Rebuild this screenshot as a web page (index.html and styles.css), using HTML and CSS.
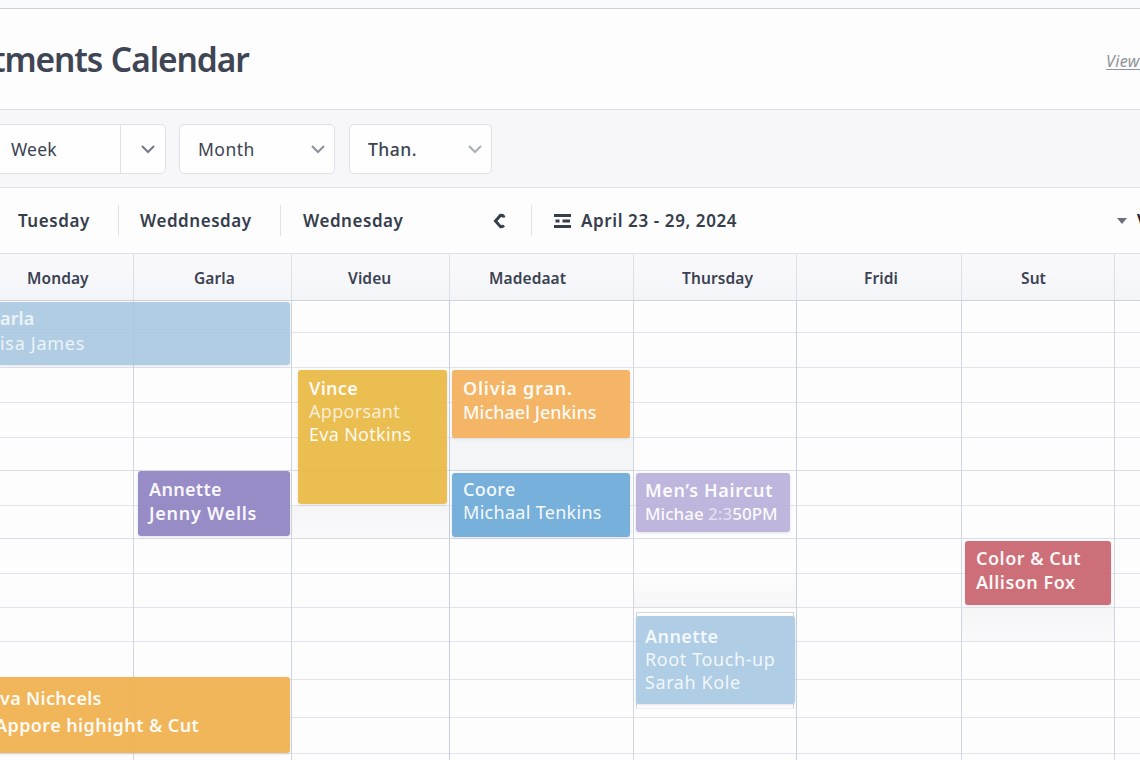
FILE: index.html
```html
<!DOCTYPE html>
<html lang="en">
<head>
    <meta charset="UTF-8">
    <meta name="viewport" content="width=device-width, initial-scale=1.0">
    <title>Appointments Calendar</title>
    <link rel="stylesheet" href="styles.css">
</head>
<body>
    <div class="topbar"></div>

    <header class="header">
        <h1>tments Calendar</h1>
        <a class="view-link">View</a>
    </header>

    <div class="filters">
        <div class="select select-week">
            <span>Week</span>
            <div class="select-toggle">
                <svg width="16" height="10" viewBox="0 0 16 10"><path d="M2 2l6 6 6-6"/></svg>
            </div>
        </div>
        <div class="select select-month">
            <span>Month</span>
            <svg width="16" height="10" viewBox="0 0 16 10"><path d="M2 2l6 6 6-6"/></svg>
        </div>
        <div class="select select-staff">
            <span>Than.</span>
            <svg width="16" height="10" viewBox="0 0 16 10"><path d="M2 2l6 6 6-6"/></svg>
        </div>
    </div>

    <nav class="toolbar">
        <span class="tab tab-1">Tuesday</span>
        <span class="tab tab-2">Weddnesday</span>
        <span class="tab tab-3">Wednesday</span>
        <svg class="prev" width="14" height="16" viewBox="0 0 14 16"><path d="M12 4.500Q11.500 2.200 8.500 2.300L3.500 8l5 5.700Q10.500 14 12 12.500"/></svg>
        <div class="range">
            <svg width="17" height="14" viewBox="0 0 17 14"><path d="M0 1.500h17M1.500 7h4M8.500 7h7.500M0 12.500h17"/></svg>
            <span>April 23 - 29, 2024</span>
        </div>
        <div class="view-menu"><i class="caret"></i><span>View</span></div>
    </nav>

    <div class="days">
        <div><span class="d1">Monday</span></div>
        <div><span class="d2">Garla</span></div>
        <div><span class="d3">Videu</span></div>
        <div><span class="d4">Madedaat</span></div>
        <div><span class="d5">Thursday</span></div>
        <div><span class="d6">Fridi</span></div>
        <div><span class="d7">Sut</span></div>
        <div></div>
    </div>

    <main class="calendar">
        <div class="row r1"></div>
        <div class="row r2"></div>
        <div class="row r3"></div>
        <div class="row r4"></div>
        <div class="row r5"></div>
        <div class="row r6"></div>
        <div class="row r7"></div>
        <div class="row r8"></div>
        <div class="row r9"></div>
        <div class="row r10"></div>
        <div class="row r11"></div>
        <div class="row r12"></div>
        <div class="row r13"></div>

        <div class="shade shade-vince"></div>
        <div class="shade shade-olivia"></div>
        <div class="shade shade-thursday"></div>
        <div class="shade shade-color"></div>

        <div class="col c1"></div>
        <div class="col c2"></div>
        <div class="col c3"></div>
        <div class="col c4"></div>
        <div class="col c5"></div>
        <div class="col c6"></div>
        <div class="col c7"></div>

        <div class="event ev-garla">
            <b>arla</b>
            <span>isa James</span>
        </div>
        <div class="event ev-vince">
            <b>Vince</b>
            <span class="faded">Apporsant</span>
            <span>Eva Notkins</span>
        </div>
        <div class="event ev-olivia">
            <b>Olivia gran.</b>
            <span class="medium">Michael Jenkins</span>
        </div>
        <div class="event ev-jenny">
            <b>Annette</b>
            <b>Jenny Wells</b>
        </div>
        <div class="event ev-coore">
            <b class="medium">Coore</b>
            <span>Michaal Tenkins</span>
        </div>
        <div class="event ev-haircut">
            <b>Men’s Haircut</b>
            <span class="medium">Michae <i class="ghost">2:3</i>50PM</span>
        </div>
        <div class="event ev-color">
            <b>Color &amp; Cut</b>
            <b>Allison Fox</b>
        </div>
        <div class="root-frame"></div>
        <div class="event ev-root">
            <b>Annette</b>
            <span>Root Touch-up</span>
            <span>Sarah Kole</span>
        </div>
        <div class="event ev-highlight">
            <b>va Nichcels</b>
            <b class="service">Appore highight &amp; Cut</b>
        </div>
    </main>
</body>
</html>
```

FILE: styles.css
```css
* {
    box-sizing: border-box;
}

body {
    margin: 0;
    width: 1140px;
    height: 760px;
    overflow: hidden;
    font-family: "Noto Sans", "Open Sans", sans-serif;
    color: #3b4252;
    background: #fdfdfe;
    display: flex;
    flex-direction: column;
}

svg {
    display: block;
    fill: none;
}

.topbar {
    height: 9px;
    background: #fafbfc;
    border-bottom: 1px solid #cdd2da;
    flex: none;
}

.header {
    height: 101px;
    flex: none;
    display: flex;
    justify-content: space-between;
    align-items: center;
    border-bottom: 1px solid #dcdfe6;
}

h1 {
    margin: 0 0 0 -8px;
    font-size: 33.5px;
    font-weight: 600;
    letter-spacing: -1.1px;
    word-spacing: 1px;
    color: #3e4554;
    white-space: nowrap;
}

.view-link {
    width: 34px;
    font-size: 16px;
    font-style: italic;
    letter-spacing: 0.4px;
    color: #909298;
    text-decoration: underline;
    text-underline-offset: 2px;
    white-space: nowrap;
    padding-top: 3px;
}

.filters {
    height: 78px;
    flex: none;
    display: flex;
    align-items: center;
    background: #f7f7f9;
    border-bottom: 1px solid #e1e3e9;
}

.select {
    height: 50px;
    display: flex;
    align-items: center;
    justify-content: space-between;
    background: #fefefe;
    border: 1px solid #dfe1e8;
    border-radius: 5px;
    font-size: 17.5px;
    letter-spacing: 0.5px;
    padding: 0 8px 0 18px;
}

.select svg {
    stroke: #8b909c;
    stroke-width: 2;
}

.select-week {
    width: 171px;
    margin-left: -5px;
    padding: 0 0 0 15px;
    letter-spacing: 0.2px;
}

.select-toggle {
    width: 45px;
    height: 48px;
    border-left: 1px solid #dfe1e8;
    display: flex;
    align-items: center;
    justify-content: center;
    padding-left: 10px;
}

.select-week svg {
    stroke: #747987;
}

.select-month {
    width: 156px;
    margin-left: 13px;
}

.select-staff {
    width: 143px;
    margin-left: 14px;
    font-weight: 500;
}

.select-staff svg {
    stroke: #a9adb6;
}

.toolbar {
    height: 66px;
    flex: none;
    display: flex;
    align-items: center;
    border-bottom: 1px solid #dfe1e6;
    font-size: 17px;
    font-weight: 600;
    letter-spacing: 0.55px;
    color: #363d4b;
    white-space: nowrap;
}

.tab {
    height: 31px;
    line-height: 31px;
}

.tab-1 {
    width: 119px;
    padding-left: 18px;
    border-right: 1px solid #dfe2e9;
}

.tab-2 {
    width: 162px;
    padding-left: 21px;
    border-right: 1px solid #dfe2e9;
}

.tab-3 {
    width: 211px;
    padding-left: 22px;
}

.prev {
    stroke: #363d4b;
    stroke-width: 3;
}

.range {
    height: 31px;
    margin-left: 25px;
    padding-left: 22px;
    border-left: 1px solid #dfe2e9;
    display: flex;
    align-items: center;
    gap: 10px;
    letter-spacing: 0.6px;
}

.range span {
    padding-bottom: 1px;
}

.range svg {
    stroke: #363d4b;
    stroke-width: 3;
}

.view-menu {
    margin-left: auto;
    width: 23px;
    display: flex;
    align-items: center;
    gap: 10px;
    color: #1d2330;
}

.caret {
    border: 5px solid transparent;
    border-top: 6px solid #6b707d;
    border-bottom: 0;
    flex: none;
}

.days,
.calendar {
    display: grid;
    grid-template-columns: 134px 158px 158px 184px 163px 165px 153px 25px;
}

.days {
    height: 47px;
    flex: none;
    background: linear-gradient(#f8f8fa 40%, #f2f4f8);
    border-bottom: 1px solid #cdd3dc;
    font-size: 15.5px;
    font-weight: 600;
    letter-spacing: 0.1px;
}

.days div {
    border-right: 1px solid #dcdfe6;
    display: flex;
    align-items: center;
    padding-top: 2px;
}

.days div:last-child {
    border-right: 0;
}

.d1 { margin-left: 27px; }
.d2 { margin-left: 60px; }
.d3 { margin-left: 56px; }
.d4 { margin-left: 39px; }
.d5 { margin-left: 48px; }
.d6 { margin-left: 67px; }
.d7 { margin-left: 59px; }

.calendar {
    flex: 1;
    grid-template-rows: 32px 35px 35px 35px 33px 35px 33px 35px 34px 34px 38px 38px 36px 6px;
}

.row {
    grid-column: 1 / -1;
    border-bottom: 1px solid #e1e4ea;
}

.r1 { grid-row: 1; }
.r2 { grid-row: 2; }
.r3 { grid-row: 3; }
.r4 { grid-row: 4; }
.r5 { grid-row: 5; border-color: #d8dce4; }
.r6 { grid-row: 6; }
.r7 { grid-row: 7; border-color: #d8dce4; }
.r8 { grid-row: 8; }
.r9 { grid-row: 9; }
.r10 { grid-row: 10; }
.r11 { grid-row: 11; }
.r12 { grid-row: 12; }
.r13 { grid-row: 13; }

.col {
    grid-row: 1 / -1;
    border-right: 1px solid #cfd6e1;
}

.c1 { grid-column: 1; }
.c2 { grid-column: 2; }
.c3 { grid-column: 3; border-color: #c1cfe1; }
.c4 { grid-column: 4; }
.c5 { grid-column: 5; border-color: #c5d2e2; }
.c6 { grid-column: 6; }
.c7 { grid-column: 7; }

.shade {
    background: linear-gradient(rgba(110, 115, 125, 0.06), rgba(110, 115, 125, 0.02));
}

.shade-vince { grid-column: 3; grid-row: 7; }
.shade-olivia { grid-column: 4; grid-row: 5; background: rgba(110, 115, 125, 0.06); }
.shade-thursday { grid-column: 5; grid-row: 9; background: linear-gradient(transparent, rgba(110, 115, 125, 0.05)); }
.shade-color { grid-column: 7; grid-row: 10; }

/* appointments */
.event {
    display: flex;
    flex-direction: column;
    border-radius: 3px;
    padding: 6px 11px;
    font-size: 18px;
    line-height: 23px;
    letter-spacing: 0.3px;
    color: rgba(255, 255, 255, 0.94);
    white-space: nowrap;
    box-shadow: 0 1px 3px rgba(60, 70, 100, 0.15);
}

.event b {
    font-weight: 600;
}

.event .medium {
    font-weight: 500;
}

.event .faded {
    color: rgba(255, 255, 255, 0.75);
}

.ev-garla {
    grid-column: 1 / 3;
    grid-row: 1 / 3;
    margin: 1px 2px 3px 0;
    padding: 4px 0 0;
    line-height: 25px;
    letter-spacing: 0.7px;
    border-radius: 0 3px 3px 0;
    background: rgba(166, 198, 224, 0.88);
    color: rgba(255, 255, 255, 0.78);
}

.ev-garla b {
    letter-spacing: 0.1px;
}

.ev-vince {
    grid-column: 3;
    grid-row: 3 / 7;
    margin: 2px 3px 2px 6px;
    padding-top: 7px;
    background: rgba(234, 186, 70, 0.94);
}

.ev-olivia {
    grid-column: 4;
    grid-row: 3 / 5;
    margin: 2px 4px 0 2px;
    line-height: 24px;
    background: rgba(243, 176, 90, 0.93);
}

.ev-olivia b {
    letter-spacing: 0.8px;
}

.ev-olivia .medium {
    letter-spacing: 0;
}

.ev-jenny {
    grid-column: 2;
    grid-row: 6 / 8;
    margin: 0 2px 3px 4px;
    line-height: 24px;
    background: rgba(146, 133, 195, 0.94);
}

.ev-jenny b + b {
    letter-spacing: 0.75px;
}

.ev-coore {
    grid-column: 4;
    grid-row: 6 / 8;
    margin: 2px 4px 2px 2px;
    padding-top: 5px;
    background: rgba(112, 171, 218, 0.94);
}

.ev-haircut {
    grid-column: 5;
    grid-row: 6 / 8;
    margin: 2px 7px 7px 2px;
    padding: 5px 0 0 9px;
    line-height: 24px;
    letter-spacing: 0.65px;
    background: rgba(186, 176, 220, 0.93);
}

.ev-haircut .medium {
    font-size: 17px;
    letter-spacing: 0;
}

.ghost {
    font-style: normal;
    opacity: 0.6;
}

.ev-color {
    grid-column: 7;
    grid-row: 8 / 10;
    margin: 2px 4px 3px 3px;
    padding-top: 5px;
    line-height: 24px;
    letter-spacing: 0.5px;
    background: rgba(200, 100, 110, 0.93);
}

.root-frame {
    grid-column: 5;
    grid-row: 10 / 13;
    margin: 4px 3px 9px 2px;
    background: #fefefe;
    border: 1px solid #d5d5da;
    border-bottom-color: #f0f0f2;
}

.ev-root {
    grid-column: 5;
    grid-row: 10 / 13;
    margin: 8px 2px 14px 2px;
    padding: 9px 9px 0;
    letter-spacing: 0.6px;
    background: #afcde5;
    color: rgba(255, 255, 255, 0.85);
}

.ev-root b {
    letter-spacing: 0.4px;
}

.ev-highlight {
    grid-column: 1 / 3;
    grid-row: 11 / 14;
    margin: 35px 2px 1px 0;
    padding: 8px 0 0;
    line-height: 27px;
    border-radius: 0 3px 3px 0;
    background: rgba(240, 176, 80, 0.94);
}

.ev-highlight .service {
    margin-left: -5px;
    letter-spacing: 0.4px;
}
```
